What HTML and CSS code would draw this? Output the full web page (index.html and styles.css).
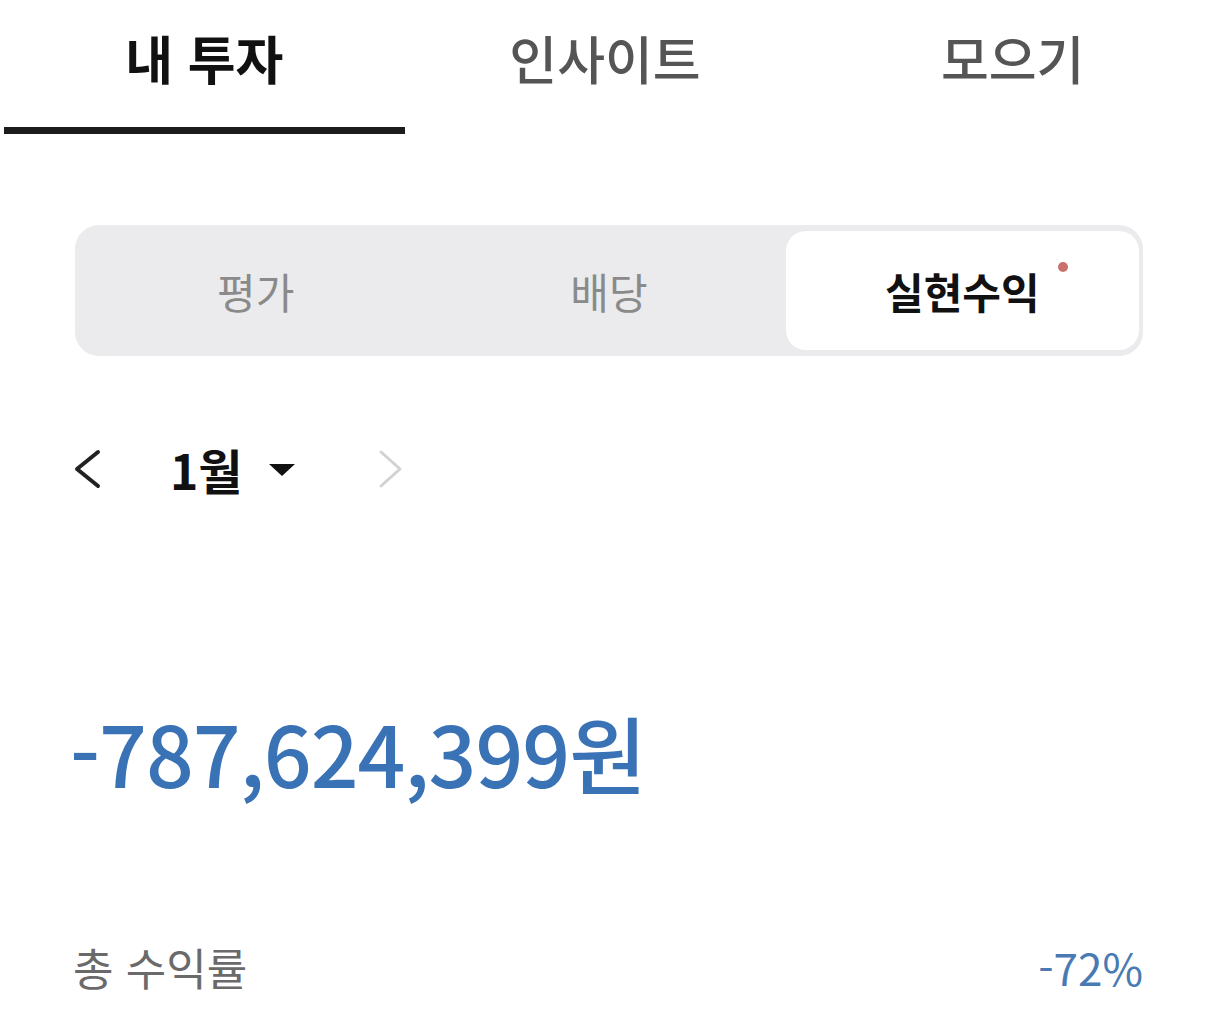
FILE: index.html
```html
<!DOCTYPE html>
<html lang="ko">
<head>
    <meta charset="UTF-8">
    <meta name="viewport" content="width=device-width, initial-scale=1.0">
    <title>내 투자</title>
    <link rel="stylesheet" href="styles.css">
</head>
<body>
    <nav class="top-tabs">
        <a class="top-tab active" href="#">내 투자</a>
        <a class="top-tab" href="#">인사이트</a>
        <a class="top-tab" href="#">모으기</a>
    </nav>

    <main class="content">
        <div class="segment">
            <button class="segment-btn">평가</button>
            <button class="segment-btn">배당</button>
            <button class="segment-btn selected"><span class="seg-label">실현수익<span class="dot"></span></span></button>
        </div>

        <div class="month-row">
            <button class="arrow">
                <svg width="30" height="40" viewBox="0 0 30 40"><path d="M25 3 L4 20 L25 37" fill="none" stroke="#222" stroke-width="4" stroke-linejoin="round" stroke-linecap="round"/></svg>
            </button>
            <div class="month">1월
                <svg class="caret" width="28" height="14" viewBox="0 0 28 14"><path d="M1 1 H27 L14 13 Z" fill="#111"/></svg>
            </div>
            <button class="arrow">
                <svg width="30" height="40" viewBox="0 0 30 40"><path d="M5 3 L24 20 L5 37" fill="none" stroke="#d2d2d2" stroke-width="3" stroke-linejoin="round" stroke-linecap="round"/></svg>
            </button>
        </div>

        <div class="amount">-787,624,399원</div>

        <div class="summary-row">
            <span class="label">총 수익률</span>
            <span class="rate">-72%</span>
        </div>
    </main>
</body>
</html>
```

FILE: styles.css
```css
body {
    margin: 0;
    padding: 0;
    background-color: #fff;
    font-family: "Noto Sans CJK KR", "Noto Sans", sans-serif;
    color: #222;
}

.top-tabs {
    display: grid;
    grid-template-columns: repeat(3, 1fr);
    padding: 0 0 0 4px;
}

.top-tab {
    text-align: center;
    text-decoration: none;
    font-size: 52px;
    font-weight: 500;
    color: #555;
    padding: 18px 0 29px;
    line-height: 80px;
    border-bottom: 7px solid transparent;
}

.top-tab:last-child {
    padding-left: 14px;
}

.top-tab.active {
    color: #111;
    font-weight: 700;
    border-bottom-color: #1c1c1c;
}

.content {
    padding: 91px 63px 0 73px;
}

.segment {
    display: grid;
    grid-template-columns: repeat(3, 1fr);
    background-color: #ebebed;
    border-radius: 24px;
    padding: 6px 4px;
    margin-left: 2px;
}

.segment-btn {
    border: none;
    background: none;
    font-family: inherit;
    font-size: 42px;
    color: #8a8a8a;
    height: 119px;
    border-radius: 20px;
}

.segment-btn.selected {
    background-color: #fff;
    color: #111;
    font-weight: 700;
}

.seg-label {
    position: relative;
}

.dot {
    position: absolute;
    width: 10px;
    height: 10px;
    border-radius: 50%;
    background-color: #c9716a;
    top: 2px;
    right: -28px;
}

.month-row {
    display: flex;
    align-items: center;
    margin-top: 78px;
}

.arrow {
    border: none;
    background: none;
    padding: 0;
    display: flex;
}

.month {
    display: flex;
    align-items: center;
    gap: 26px;
    font-size: 48px;
    font-weight: 700;
    color: #111;
    margin: 0 80px 0 67px;
}

.caret {
    margin-top: 2px;
}

.amount {
    margin-top: 206px;
    margin-left: -3px;
    font-size: 84px;
    font-weight: 500;
    color: #3a72b6;
    letter-spacing: -1px;
    line-height: 1;
}

.summary-row {
    display: flex;
    justify-content: space-between;
    align-items: center;
    margin-top: 141px;
}

.label {
    font-size: 44px;
    color: #6a6a6a;
}

.rate {
    font-size: 44px;
    color: #4a7ab3;
}
```
